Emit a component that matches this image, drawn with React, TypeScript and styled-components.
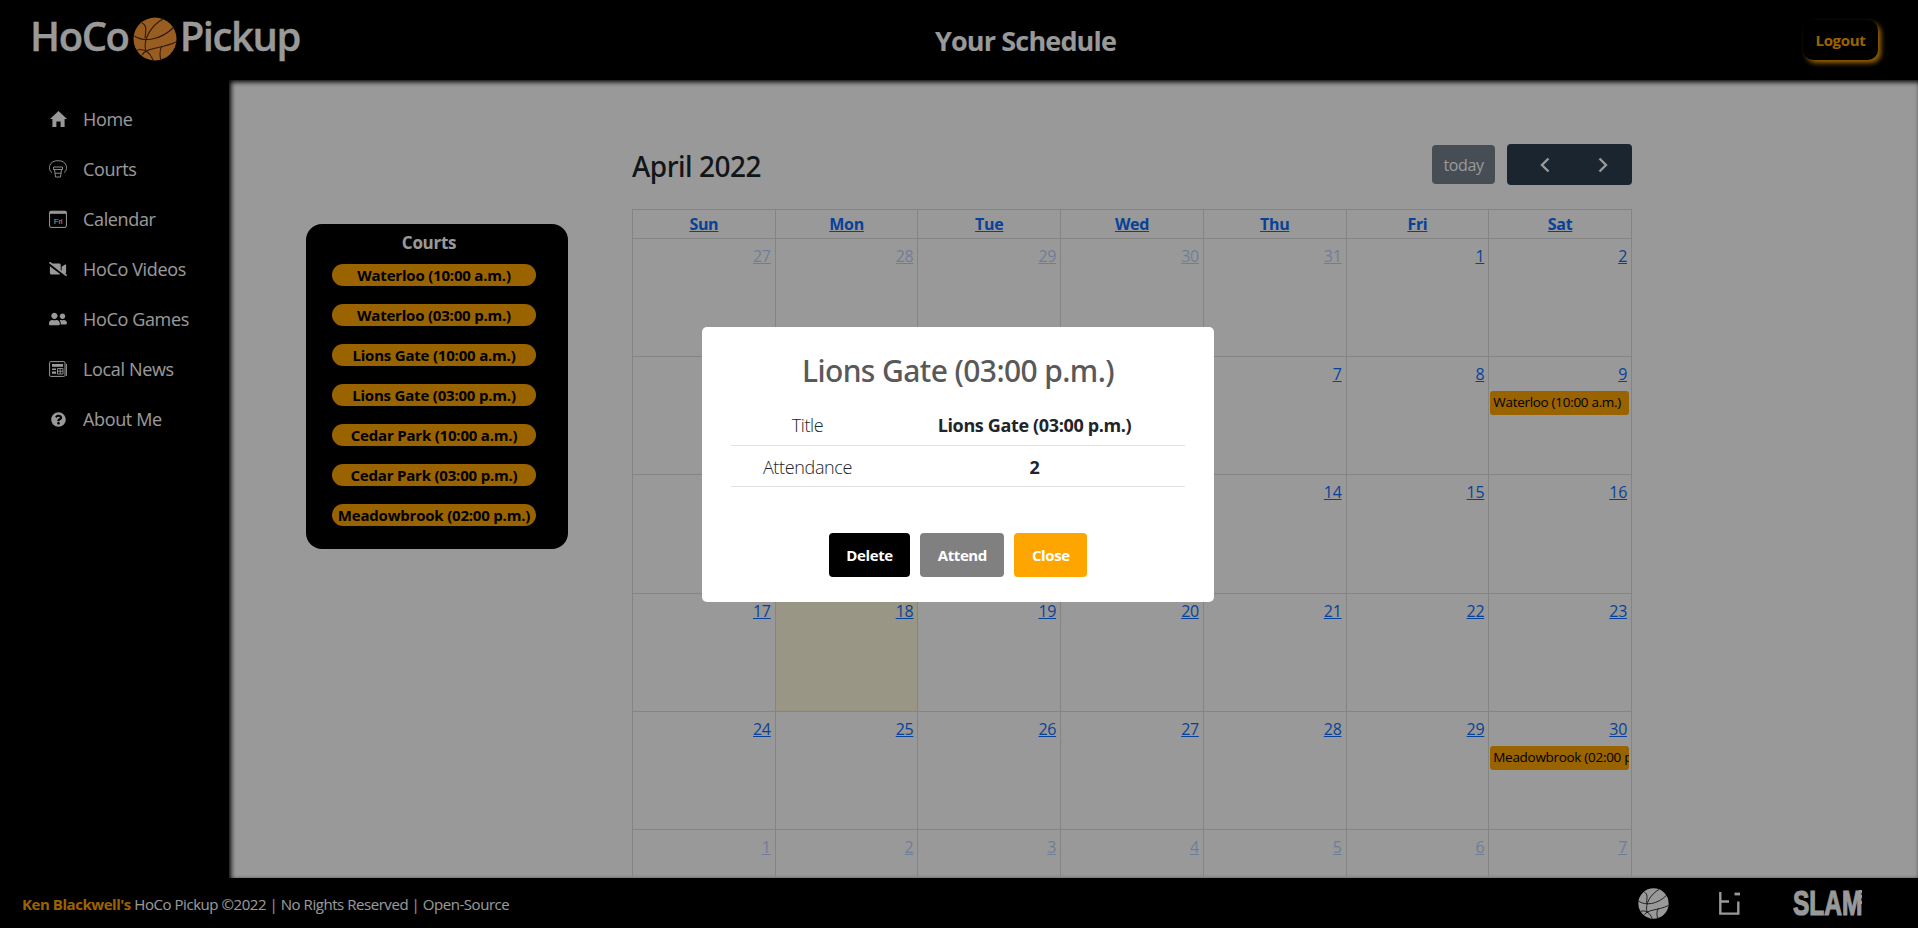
import React from 'react'
import styled, { createGlobalStyle } from 'styled-components'
import { FaVideoSlash, FaUserFriends, FaQuestionCircle } from 'react-icons/fa'

const courts = [
  'Waterloo (10:00 a.m.)',
  'Waterloo (03:00 p.m.)',
  'Lions Gate (10:00 a.m.)',
  'Lions Gate (03:00 p.m.)',
  'Cedar Park (10:00 a.m.)',
  'Cedar Park (03:00 p.m.)',
  'Meadowbrook (02:00 p.m.)',
]

const weekdays = ['Sun', 'Mon', 'Tue', 'Wed', 'Thu', 'Fri', 'Sat']

type Day = { n: number; muted?: boolean; today?: boolean; event?: string }

const firstDays: Day[] = [27, 28, 29, 30, 31].map((n) => ({ n, muted: true }))
const aprilDays: Day[] = Array.from({ length: 30 }, (_, i) => ({ n: i + 1 }))
const lastDays: Day[] = [1, 2, 3, 4, 5, 6, 7].map((n) => ({ n, muted: true }))
aprilDays[8].event = 'Waterloo (10:00 a.m.)'
aprilDays[17].today = true
aprilDays[29].event = 'Meadowbrook (02:00 p.m.)'
const days = [...firstDays, ...aprilDays, ...lastDays]

const Ball = ({ size, fill, line }: { size: number; fill: string; line: string }) => (
  <svg width={size} height={size} viewBox="0 0 44 44">
    <circle cx="22" cy="22" r="21.5" fill={fill} />
    <g fill="none" stroke={line} strokeWidth="1.1">
      <path d="M1.5 19C10 25 27 24 41 10" />
      <path d="M4 33C12 31 17 36 20 43" />
      <path d="M9 38C14 30 28 32 43 25" />
      <path d="M13 35C9 22 19 8 30 2" />
      <path d="M9 6C14 8 13 14 12 21" />
      <path d="M28 44C26 36 27 32 29 29" />
    </g>
  </svg>
)

const HomeIcon = () => (
  <svg width="17" height="16" viewBox="0 0 17 16" fill="currentColor">
    <path d="M8.5 0 17 8h-2.4v8h-4V10.5H6.4V16h-4V8H0z" />
  </svg>
)

const HoopIcon = () => (
  <svg width="18" height="18" viewBox="0 0 18 18" fill="none" stroke="currentColor" strokeWidth=".9">
    <path d="M3 12.5C.2 11 .2 7.5.8 5.5 2 2 5 .7 9 .7s7 1.3 8.2 4.8c.6 2 .6 5.5-2.2 7" />
    <path d="M4.5 7h9v2.5h-9zM5.5 9.5l1 7.5h5l1-7.5M6 13.2h6" />
  </svg>
)

const CalendarIcon = () => (
  <svg width="18" height="18" viewBox="0 0 18 18">
    <rect x=".6" y="1.2" width="16.8" height="16.2" rx="1.5" fill="none" stroke="currentColor" />
    <rect x=".6" y="1.2" width="16.8" height="2.6" fill="currentColor" />
    <text x="9" y="13.5" textAnchor="middle" fontSize="8" fontFamily="'Liberation Sans', sans-serif" fill="currentColor">Fri</text>
  </svg>
)

const NewsIcon = () => (
  <svg width="18" height="16" viewBox="0 0 18 16" fill="none" stroke="currentColor">
    <rect x=".6" y=".6" width="15.4" height="14.8" rx="1.2" />
    <path d="M17.4 3v12" />
    <rect x="3" y="3" width="11" height="2.8" fill="currentColor" stroke="none" />
    <path d="M3 7.5h4v1.6H3zM3 10.5h4v2.2H3z" fill="currentColor" stroke="none" />
    <path d="M8.5 7.5H14v5.5H8.5zM8.5 10.2H14M11.2 7.5V13" strokeWidth=".9" />
  </svg>
)

const navItems = [
  { label: 'Home', icon: <HomeIcon /> },
  { label: 'Courts', icon: <HoopIcon /> },
  { label: 'Calendar', icon: <CalendarIcon /> },
  { label: 'HoCo Videos', icon: <FaVideoSlash size={18} /> },
  { label: 'HoCo Games', icon: <FaUserFriends size={18} /> },
  { label: 'Local News', icon: <NewsIcon /> },
  { label: 'About Me', icon: <FaQuestionCircle size={15} /> },
]

const App = () => {
  return (
    <>
      <GlobalStyle />
      <Page>
        <Header>
          <Logo>
            HoCo
            <LogoBall>
              <Ball size={44} fill="#fd9c38" line="#53290f" />
            </LogoBall>
            Pickup
          </Logo>
          <PageTitle>Your Schedule</PageTitle>
          <LogoutButton>Logout</LogoutButton>
        </Header>
        <Middle>
          <Sidebar>
            {navItems.map((item) => (
              <NavItem key={item.label}>
                <NavIcon>{item.icon}</NavIcon>
                {item.label}
              </NavItem>
            ))}
          </Sidebar>
          <Main>
            <CourtsPanel>
              <CourtsTitle>Courts</CourtsTitle>
              {courts.map((court) => (
                <CourtPill key={court}>{court}</CourtPill>
              ))}
            </CourtsPanel>
            <Calendar>
              <Toolbar>
                <MonthTitle>April 2022</MonthTitle>
                <ToolbarRight>
                  <TodayButton>today</TodayButton>
                  <NavGroup>
                    <ArrowButton>
                      <svg width="14" height="16" viewBox="0 0 14 16" fill="none" stroke="currentColor" strokeWidth="2.4">
                        <path d="M10.5 1.5 4 8l6.5 6.5" />
                      </svg>
                    </ArrowButton>
                    <ArrowButton>
                      <svg width="14" height="16" viewBox="0 0 14 16" fill="none" stroke="currentColor" strokeWidth="2.4">
                        <path d="M3.5 1.5 10 8l-6.5 6.5" />
                      </svg>
                    </ArrowButton>
                  </NavGroup>
                </ToolbarRight>
              </Toolbar>
              <Grid>
                {weekdays.map((day) => (
                  <HeadCell key={day}>
                    <a>{day}</a>
                  </HeadCell>
                ))}
                {days.map((day, i) => (
                  <DayCell key={i} $today={day.today}>
                    <DayNumber $muted={day.muted}>{day.n}</DayNumber>
                    {day.event && <EventChip>{day.event}</EventChip>}
                  </DayCell>
                ))}
              </Grid>
            </Calendar>
          </Main>
        </Middle>
        <Footer>
          <FooterText>
            <strong>Ken Blackwell's</strong> HoCo Pickup ©2022 | No Rights Reserved | Open-Source
          </FooterText>
          <FooterLogos>
            <Ball size={31} fill="#ffffff" line="#000000" />
            <svg width="21" height="23" viewBox="0 0 21 23" fill="none" stroke="#fff" strokeWidth="2.4">
              <path d="M1.3 0v21.6h18V9.5M1.3 9.5H10" />
              <path d="M15.5 2h5.5" strokeWidth="2.8" />
            </svg>
            <SlamMark>
              <SlamWord>SLAM</SlamWord>
              <SlamDots />
            </SlamMark>
          </FooterLogos>
        </Footer>
      </Page>
      <Overlay>
        <Modal>
          <ModalTitle>Lions Gate (03:00 p.m.)</ModalTitle>
          <DetailTable>
            <tbody>
              <tr>
                <td>Title</td>
                <td>Lions Gate (03:00 p.m.)</td>
              </tr>
              <tr>
                <td>Attendance</td>
                <td>2</td>
              </tr>
            </tbody>
          </DetailTable>
          <ModalActions>
            <ModalButton $bg="#000000">Delete</ModalButton>
            <ModalButton $bg="#808080">Attend</ModalButton>
            <ModalButton $bg="#ffa500">Close</ModalButton>
          </ModalActions>
        </Modal>
      </Overlay>
    </>
  )
}

export default App

const font = `'Open Sans', 'Noto Sans', sans-serif`

const GlobalStyle = createGlobalStyle`
  html, body {
    margin: 0;
    padding: 0;
    height: 100%;
    overflow: hidden;
    font-family: ${font};
    background: #000;
  }
  * {
    box-sizing: border-box;
  }
`
const Page = styled.div`
  width: 100%;
  height: 100vh;
  display: flex;
  flex-direction: column;
  background-color: #000;
  color: #fff;
`
const Header = styled.header`
  height: 80px;
  flex-shrink: 0;
  display: grid;
  grid-template-columns: 935px auto 1fr;
  align-items: center;
  padding-right: 40px;
`
const Logo = styled.div`
  display: flex;
  align-items: center;
  padding-left: 30px;
  font-size: 40px;
  font-weight: 600;
  letter-spacing: -1.4px;
  -webkit-text-stroke: 0.3px #fff;
  color: #fff;
  margin-top: -9px;
`
const LogoBall = styled.span`
  display: flex;
  margin: 7px 3px 0 4px;
`
const PageTitle = styled.h1`
  margin: 0;
  font-size: 27px;
  font-weight: 700;
  letter-spacing: -0.85px;
  color: #fff;
`
const LogoutButton = styled.button`
  justify-self: end;
  width: 75px;
  height: 40px;
  border: 0;
  border-radius: 10px;
  background: #000;
  color: #ffa500;
  font-family: ${font};
  font-size: 15px;
  font-weight: 700;
  letter-spacing: -0.3px;
  box-shadow: 3px 3px 5px #ffa500;
`
const Middle = styled.div`
  flex: 1;
  min-height: 0;
  display: flex;
`
const Sidebar = styled.nav`
  width: 229px;
  flex-shrink: 0;
  padding-top: 14px;
`
const NavItem = styled.a`
  height: 50px;
  display: flex;
  align-items: center;
  gap: 16px;
  padding-left: 49px;
  font-size: 18px;
  letter-spacing: -0.35px;
  color: #fff;
`
const NavIcon = styled.span`
  width: 18px;
  display: flex;
  justify-content: center;
`
const Main = styled.main`
  flex: 1;
  min-width: 0;
  display: flex;
  align-items: flex-start;
  gap: 64px;
  padding: 64px 0 0 77px;
  overflow: hidden;
  background-color: #fff;
  box-shadow: inset 2px 2px 5px #000;
`
const CourtsPanel = styled.aside`
  width: 262px;
  height: 325px;
  flex-shrink: 0;
  margin-top: 80px;
  padding: 6px 32px 0 26px;
  background-color: #000;
  border-radius: 16px;
  display: flex;
  flex-direction: column;
`
const CourtsTitle = styled.h3`
  margin: 0 0 8px;
  height: 26px;
  padding-right: 10px;
  font-size: 17px;
  line-height: 26px;
  font-weight: 700;
  letter-spacing: -0.3px;
  text-align: center;
  color: #fff;
`
const CourtPill = styled.div`
  width: 100%;
  height: 22px;
  flex-shrink: 0;
  margin-bottom: 18px;
  border-radius: 11px;
  background-color: #ffa500;
  color: #000;
  font-size: 15px;
  line-height: 23px;
  font-weight: 700;
  letter-spacing: -0.2px;
  text-align: center;
  white-space: nowrap;
`
const Calendar = styled.section`
  width: 1000px;
  flex-shrink: 0;
  color: #000;
`
const Toolbar = styled.div`
  height: 65px;
  display: flex;
  justify-content: space-between;
  align-items: flex-start;
`
const MonthTitle = styled.h2`
  margin: 0;
  height: 41px;
  font-family: 'Noto Sans', ${font};
  font-size: 28px;
  line-height: 44px;
  font-weight: 500;
  letter-spacing: -0.5px;
  color: #212529;
`
const ToolbarRight = styled.div`
  display: flex;
  align-items: center;
  gap: 12px;
`
const TodayButton = styled.button`
  width: 63px;
  height: 39px;
  padding: 0;
  border: 0;
  border-radius: 4px;
  background-color: #2c3e50;
  opacity: 0.65;
  color: #fff;
  font-family: ${font};
  font-size: 16px;
  letter-spacing: -0.4px;
`
const NavGroup = styled.div`
  width: 125px;
  height: 41px;
  padding-left: 9px;
  display: flex;
  border-radius: 4px;
  background-color: #2c3e50;
`
const ArrowButton = styled.button`
  width: 61px;
  padding: 0;
  border: 0;
  background: none;
  color: #fff;
  display: flex;
  align-items: center;
  justify-content: center;
`
const Grid = styled.div`
  display: grid;
  grid-template-columns: repeat(7, 1fr);
  border-top: 1px solid #ddd;
  border-left: 1px solid #ddd;
`
const HeadCell = styled.div`
  height: 28.5px;
  border-right: 1px solid #ddd;
  border-bottom: 1px solid #ddd;
  text-align: center;
  font-size: 16px;
  line-height: 29px;
  font-weight: 700;
  letter-spacing: -0.3px;
  a {
    color: #0d6efd;
    text-decoration: underline;
  }
`
const DayCell = styled.div<{ $today?: boolean }>`
  height: 118.4px;
  padding: 0 0 0 1px;
  border-right: 1px solid #ddd;
  border-bottom: 1px solid #ddd;
  background-color: ${(p) => (p.$today ? 'rgba(255, 220, 40, 0.15)' : 'transparent')};
  overflow: hidden;
`
const DayNumber = styled.a<{ $muted?: boolean }>`
  display: block;
  height: 34px;
  padding: 5px 4px 0 0;
  text-align: right;
  font-size: 16px;
  line-height: 24px;
  letter-spacing: -0.3px;
  color: #0d6efd;
  text-decoration: underline;
  opacity: ${(p) => (p.$muted ? 0.3 : 1)};
`
const EventChip = styled.div`
  height: 24px;
  padding: 0 3px;
  margin-right: 2px;
  border-radius: 3px;
  background-color: #ffa500;
  color: #000;
  font-size: 13.5px;
  line-height: 23px;
  letter-spacing: -0.3px;
  white-space: nowrap;
  overflow: hidden;
`
const Footer = styled.footer`
  height: 50px;
  flex-shrink: 0;
  display: flex;
  justify-content: space-between;
  align-items: center;
  padding: 0 56px 0 22px;
  background-color: #000;
`
const FooterText = styled.div`
  padding-top: 2px;
  font-size: 15px;
  letter-spacing: -0.45px;
  color: #fff;
  strong {
    color: #ffa500;
  }
`
const FooterLogos = styled.div`
  display: flex;
  align-items: center;
  gap: 50px;
`
const SlamMark = styled.span`
  width: 69px;
  margin-left: 3px;
  display: flex;
  align-items: flex-start;
  justify-content: space-between;
`
const SlamWord = styled.span`
  display: block;
  width: 99px;
  margin-right: -34px;
  height: 26px;
  font-family: 'Liberation Sans', sans-serif;
  font-size: 35px;
  line-height: 26px;
  font-weight: 700;
  color: #fff;
  -webkit-text-stroke: 1.2px #fff;
  transform: scaleX(0.7);
  transform-origin: left center;
`
const SlamDots = styled.span`
  width: 3px;
  height: 14px;
  border-left: 3px dotted #fff;
`
const Overlay = styled.div`
  position: fixed;
  inset: 0;
  padding-right: 2px;
  display: flex;
  align-items: center;
  justify-content: center;
  background-color: rgba(0, 0, 0, 0.4);
`
const Modal = styled.div`
  width: 512px;
  height: 275px;
  padding: 19px 29px 0;
  border-radius: 5px;
  background-color: #fff;
  display: flex;
  flex-direction: column;
  align-items: stretch;
`
const ModalTitle = styled.h2`
  margin: 0 0 9px;
  font-family: 'Noto Sans', ${font};
  font-size: 30px;
  line-height: 50px;
  font-weight: 500;
  letter-spacing: -0.6px;
  text-align: center;
  color: #595959;
`
const DetailTable = styled.table`
  width: 100%;
  border-collapse: collapse;
  table-layout: fixed;
  color: #212529;
  font-size: 18px;
  letter-spacing: -0.35px;
  td {
    height: 41px;
    padding: 1px 0 0;
    text-align: center;
    border-bottom: 1px solid #dee2e6;
  }
  td:first-child {
    width: 153px;
    font-weight: 300;
  }
  td:last-child {
    font-weight: 700;
  }
`
const ModalActions = styled.div`
  margin-top: 46px;
  display: flex;
  justify-content: center;
  gap: 10px;
`
const ModalButton = styled.button<{ $bg: string }>`
  height: 44px;
  padding: 0 17.5px;
  border: 0;
  border-radius: 4px;
  background-color: ${(p) => p.$bg};
  color: #fff;
  font-family: ${font};
  font-size: 15px;
  font-weight: 700;
  letter-spacing: -0.4px;
`
